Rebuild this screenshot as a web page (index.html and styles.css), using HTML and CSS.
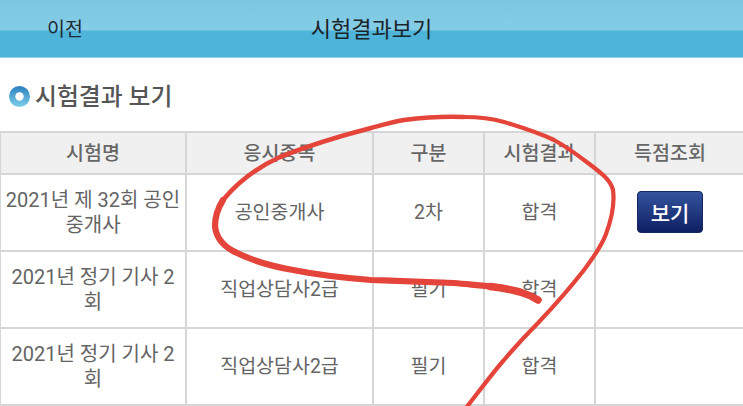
FILE: index.html
```html
<!DOCTYPE html>
<html lang="ko">
<head>
<meta charset="utf-8">
<title>시험결과보기</title>
<link rel="stylesheet" href="styles.css">
</head>
<body>
<div class="page">
  <header class="topbar">
    <a class="back">이전</a>
    <h1 class="topbar-title">시험결과보기</h1>
  </header>
  <section class="heading">
    <svg class="bullet" viewBox="0 0 20 20" aria-hidden="true">
      <defs>
        <linearGradient id="ring" x1="0" y1="0" x2="0" y2="1">
          <stop offset="0" stop-color="#2a7fbe"/>
          <stop offset="1" stop-color="#7fd0ea"/>
        </linearGradient>
      </defs>
      <circle cx="10" cy="10" r="10" fill="url(#ring)"/>
      <circle cx="10" cy="10" r="4" fill="#fff"/>
    </svg>
    <h2 class="heading-text">시험결과 보기</h2>
  </section>
  <table class="results">
    <colgroup>
      <col class="c1"><col class="c2"><col class="c3"><col class="c4"><col class="c5">
    </colgroup>
    <thead>
      <tr><th>시험명</th><th>응시종목</th><th>구분</th><th>시험결과</th><th>득점조회</th></tr>
    </thead>
    <tbody>
      <tr><td class="name">2021년 제 32회 공인중개사</td><td>공인중개사</td><td>2차</td><td>합격</td><td><button class="view">보기</button></td></tr>
      <tr><td class="name">2021년 정기 기사 2회</td><td>직업상담사2급</td><td>필기</td><td>합격</td><td></td></tr>
      <tr><td class="name">2021년 정기 기사 2회</td><td>직업상담사2급</td><td>필기</td><td>합격</td><td></td></tr>
    </tbody>
  </table>
  <svg class="scribble" viewBox="0 0 743 406" aria-hidden="true">
    <path class="stroke-thin" d="M466 408 C480 390 495 370 504 360 C515 347 526 335 538 323 C555 305 570 288 584 270 C596 254 602 245 606 234 C612 218 615 205 613 190 C611 180 600 172 588 163 C575 153 565 146 554 140 C535 131 520 127 504 122 C490 118 478 117 464 117"/>
    <path class="stroke-mid" d="M464 117 C440 116 420 118 404 120 C392 122 382 125 371 128 C340 136 310 145 280 157 C258 167 238 182 223 200"/>
    <path class="stroke-thick" d="M223 200 C218 208 215 218 215 226 C216 238 224 246 233 251 C250 260 270 266 293 270 C318 275 345 278 371 280 C400 281 430 282 454 283 C475 285 490 286 504 288"/>
    <path class="stroke-end" d="M490 286.500 C504 288 512 290 520 292 C527 294 533 297 538 300"/>
  </svg>
</div>
</body>
</html>
```
FILE: styles.css
```css
html, body {
  margin: 0;
  padding: 0;
  background: #fff;
}
.page {
  position: relative;
  width: 743px;
  height: 406px;
  overflow: hidden;
  font-family: Roboto, "Noto Sans CJK KR", sans-serif;
  color: #5f5f5f;
}
.topbar {
  position: relative;
  height: 58px;
  box-sizing: border-box;
  background: linear-gradient(#7cc6e1 0, #85cde6 30px, #4fb4d9 31px, #4fb4d9 57px, #d5edf6 58px);
  display: flex;
  align-items: center;
  justify-content: center;
  padding-top: 1px;
}
.back {
  position: absolute;
  left: 47px;
  top: 16px;
  font-size: 19.5px;
  line-height: 28px;
  color: #1c2a33;
}
.topbar-title {
  margin: 0;
  font-size: 22px;
  font-weight: 400;
  line-height: 56px;
  color: #1a242b;
}
.heading {
  display: flex;
  align-items: center;
  height: 73px;
  padding: 4px 0 0 9px;
  box-sizing: border-box;
}
.bullet {
  width: 21px;
  height: 21px;
  flex: none;
  margin-right: 5px;
}
.heading-text {
  margin: 0;
  font-size: 23.8px;
  font-weight: 500;
  line-height: 30px;
  color: #555;
}
.results {
  border-collapse: collapse;
  table-layout: fixed;
  width: 745px;
  margin-left: -1px;
  font-size: 19.5px;
  border-top: 2px solid #d6d6d6;
}
.c1 { width: 186px; }
.c2 { width: 187px; }
.c3 { width: 111px; }
.c4 { width: 111px; }
.c5 { width: 150px; }
.results th,
.results td {
  border: 2px solid #d6d6d6;
  text-align: center;
  vertical-align: middle;
  padding: 0 3px;
  line-height: 26px;
  word-break: break-all;
}
.results th {
  height: 39px;
  padding-top: 1px;
  box-sizing: content-box;
  background: #f0f0f0;
  font-weight: 500;
  color: #666;
  font-size: 19.5px;
  line-height: 24px;
}
.results td {
  height: 75px;
  font-weight: 400;
  color: #646464;
}
.results td.name {
  font-size: 20px;
  line-height: 25px;
}
.view {
  display: block;
  margin: -1px auto 0;
  width: 66px;
  height: 42px;
  padding: 0;
  border: 1px solid #17275f;
  border-radius: 4px;
  background: linear-gradient(#33549f, #0f1f62);
  color: #fff;
  font-family: inherit;
  font-size: 21px;
  font-weight: 500;
}
.scribble {
  position: absolute;
  left: 0;
  top: 0;
  width: 743px;
  height: 406px;
  pointer-events: none;
}
.scribble path {
  fill: none;
  stroke: #e4443a;
  stroke-linecap: round;
  stroke-linejoin: round;
}
.stroke-thin { stroke-width: 4.2; }
.stroke-mid { stroke-width: 4.6; }
.stroke-thick { stroke-width: 6.2; }
.stroke-end { stroke-width: 7.5; }
```
